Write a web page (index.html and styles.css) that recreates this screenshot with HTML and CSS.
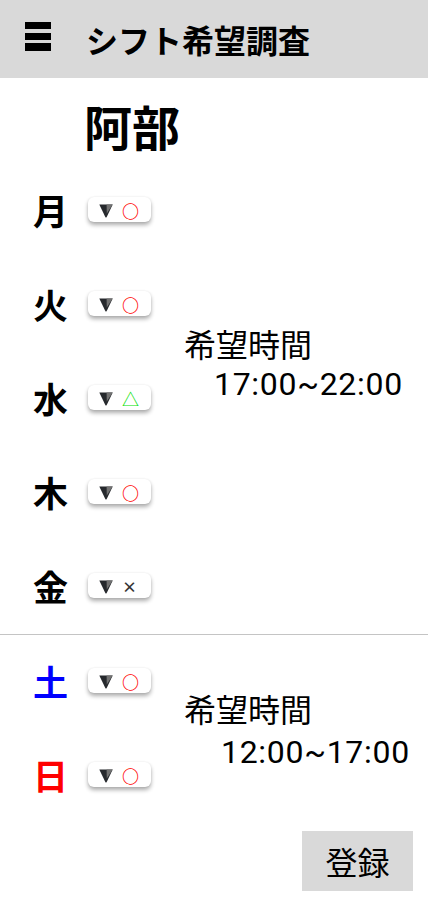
FILE: index.html
```html
<!DOCTYPE html>
<html lang="ja">
<head>
<meta charset="utf-8">
<title>シフト希望調査</title>
<link rel="stylesheet" href="styles.css">
</head>
<body>
<header class="appbar">
  <svg class="menu-icon" width="26" height="29" viewBox="0 0 26 29" aria-hidden="true">
    <rect x="0" y="0" width="26" height="7" fill="#000"/>
    <rect x="0" y="11" width="26" height="7" fill="#000"/>
    <rect x="0" y="21" width="26" height="8" fill="#000"/>
  </svg>
  <h1 class="title">シフト希望調査</h1>
</header>
<main class="content">
  <h2 class="name">阿部</h2>

  <section class="group group-weekday">
    <ul class="days">
      <li class="day"><span class="day-label">月</span><div class="pick"><svg class="caret" width="14" height="14" viewBox="0 0 14 14"><path d="M0.3 0.5 H13.7 L7.7 13 Q7 14.2 6.3 13 Z" fill="#26292d"/><path d="M7.6 0.5 H13.7 L7.8 9.5 Z" fill="#727272"/></svg><span class="mark mark-ok">○</span></div></li>
      <li class="day"><span class="day-label">火</span><div class="pick"><svg class="caret" width="14" height="14" viewBox="0 0 14 14"><path d="M0.3 0.5 H13.7 L7.7 13 Q7 14.2 6.3 13 Z" fill="#26292d"/><path d="M7.6 0.5 H13.7 L7.8 9.5 Z" fill="#727272"/></svg><span class="mark mark-ok">○</span></div></li>
      <li class="day"><span class="day-label">水</span><div class="pick"><svg class="caret" width="14" height="14" viewBox="0 0 14 14"><path d="M0.3 0.5 H13.7 L7.7 13 Q7 14.2 6.3 13 Z" fill="#26292d"/><path d="M7.6 0.5 H13.7 L7.8 9.5 Z" fill="#727272"/></svg><span class="mark mark-maybe">△</span></div></li>
      <li class="day"><span class="day-label">木</span><div class="pick"><svg class="caret" width="14" height="14" viewBox="0 0 14 14"><path d="M0.3 0.5 H13.7 L7.7 13 Q7 14.2 6.3 13 Z" fill="#26292d"/><path d="M7.6 0.5 H13.7 L7.8 9.5 Z" fill="#727272"/></svg><span class="mark mark-ok">○</span></div></li>
      <li class="day"><span class="day-label">金</span><div class="pick"><svg class="caret" width="14" height="14" viewBox="0 0 14 14"><path d="M0.3 0.5 H13.7 L7.7 13 Q7 14.2 6.3 13 Z" fill="#26292d"/><path d="M7.6 0.5 H13.7 L7.8 9.5 Z" fill="#727272"/></svg><span class="mark mark-ng">×</span></div></li>
    </ul>
    <div class="hope hope-weekday">
      <p class="hope-title">希望時間</p>
      <p class="hope-time">17:00~22:00</p>
    </div>
  </section>

  <hr class="divider">

  <section class="group group-weekend">
    <ul class="days">
      <li class="day"><span class="day-label sat">土</span><div class="pick"><svg class="caret" width="14" height="14" viewBox="0 0 14 14"><path d="M0.3 0.5 H13.7 L7.7 13 Q7 14.2 6.3 13 Z" fill="#26292d"/><path d="M7.6 0.5 H13.7 L7.8 9.5 Z" fill="#727272"/></svg><span class="mark mark-ok">○</span></div></li>
      <li class="day"><span class="day-label sun">日</span><div class="pick"><svg class="caret" width="14" height="14" viewBox="0 0 14 14"><path d="M0.3 0.5 H13.7 L7.7 13 Q7 14.2 6.3 13 Z" fill="#26292d"/><path d="M7.6 0.5 H13.7 L7.8 9.5 Z" fill="#727272"/></svg><span class="mark mark-ok">○</span></div></li>
    </ul>
    <div class="hope hope-weekend">
      <p class="hope-title">希望時間</p>
      <p class="hope-time">12:00~17:00</p>
    </div>
  </section>

  <div class="actions">
    <button class="submit" type="button">登録</button>
  </div>
</main>
</body>
</html>
```

FILE: styles.css
```css
* { box-sizing: border-box; }

html, body {
  margin: 0;
  padding: 0;
  background: #ffffff;
}

body {
  font-family: Roboto, "Noto Sans CJK JP", sans-serif;
  color: #000;
}

.appbar {
  height: 78px;
  background: #d9d9d9;
  display: flex;
  align-items: center;
  gap: 35px;
  padding-left: 25px;
}

.menu-icon {
  display: block;
  margin-bottom: 5px;
}

.title {
  margin: 0;
  font-family: "Noto Sans CJK JP", sans-serif;
  font-weight: 700;
  font-size: 32px;
  line-height: 32px;
}

.content {
  display: flex;
  flex-direction: column;
}

.name {
  margin: 0;
  padding: 23px 0 13px 84px;
  font-family: "Noto Sans CJK JP", sans-serif;
  font-weight: 700;
  font-size: 48px;
  line-height: 48px;
}

.group {
  display: flex;
  align-items: flex-start;
}

.group-weekend {
  margin-top: -2px;
}

.days {
  list-style: none;
  margin: 0;
  padding: 0;
}

.day {
  height: 94px;
  display: flex;
  align-items: center;
  gap: 20px;
  padding-left: 33px;
}

.day-label {
  width: 35px;
  font-family: "Noto Sans CJK JP", sans-serif;
  font-weight: 700;
  font-size: 35px;
  line-height: 35px;
}

.day-label.sat { color: #0000ff; }
.day-label.sun { color: #ff0000; }

.pick {
  width: 63px;
  height: 25px;
  padding: 4px 0 0 11px;
  display: flex;
  align-items: center;
  gap: 9px;
  background: #fff;
  border-radius: 6px;
  box-shadow: 0 3px 4px rgba(0, 0, 0, 0.32), 0 0 2px rgba(0, 0, 0, 0.08);
}

.caret {
  display: block;
  flex: none;
}

.mark {
  font-family: "Noto Sans CJK JP", sans-serif;
  font-size: 17px;
  line-height: 17px;
  margin-bottom: 2px;
}

.mark-ok { color: #ff0000; font-weight: 700; }
.mark-maybe { color: #00e000; }
.mark-ng { color: #333333; font-weight: 700; font-size: 15px; }

.hope {
  margin-left: 33px;
}

.hope-weekday { margin-top: 161px; }
.hope-weekend { margin-top: 55px; }

.hope-title {
  margin: 0;
  font-family: "Noto Sans CJK JP", sans-serif;
  font-size: 32px;
  line-height: 40px;
}

.hope-time {
  margin: 1px 0 0;
  font-family: Roboto, sans-serif;
  font-size: 32px;
  line-height: 40px;
  letter-spacing: 0.7px;
}

.hope-weekday .hope-time { padding-left: 30px; }
.hope-weekend .hope-time { padding-left: 37px; margin-top: 4px; }

.divider {
  margin: 2px 0 0;
  border: 0;
  height: 1px;
  background: #c4c4c4;
}

.actions {
  display: flex;
  justify-content: flex-end;
  padding-right: 15px;
  margin-top: 10px;
}

.submit {
  width: 111px;
  height: 60px;
  border: 0;
  border-radius: 0;
  background: #d9d9d9;
  color: #000;
  font-family: "Noto Sans CJK JP", sans-serif;
  font-size: 32px;
  line-height: 32px;
  padding: 0;
}
```
